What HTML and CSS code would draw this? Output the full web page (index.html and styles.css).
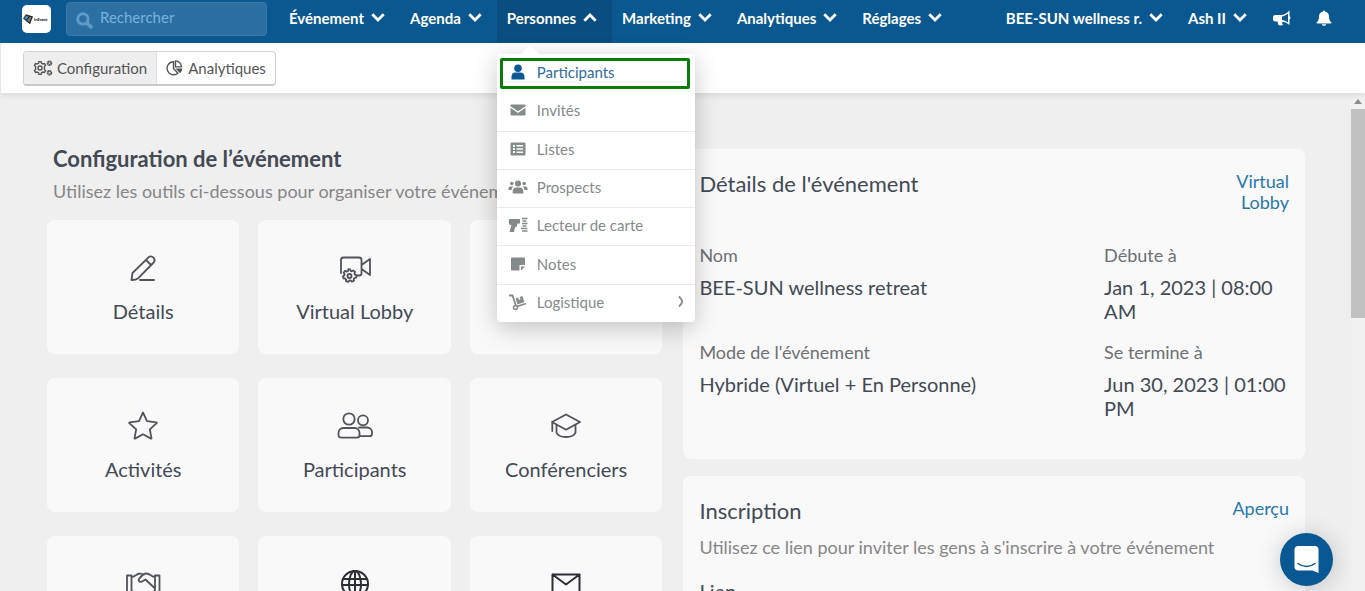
FILE: index.html
```
<!DOCTYPE html>
<html lang="fr">
<head>
<meta charset="utf-8">
<title>Configuration de l’événement</title>
<link rel="stylesheet" href="styles.css">
</head>
<body>
<svg class="defs" aria-hidden="true">
  <symbol id="chev" viewBox="0 0 14 9"><path d="M1.300 1.300 7 7 12.700 1.300" fill="none" stroke="currentColor" stroke-width="2.800"/></symbol>
</svg>
<header class="topbar">
  <a class="logo" href="#" aria-label="Accueil">
    <svg viewBox="0 0 29 28" width="29" height="28"><path d="M1 13.500 4 9.200l7 2.300L8 19.200z" fill="#222"/><path d="m2 13.200 2.500-2.700 2.200 1-2.400 3.200z" fill="#3f91c4"/><path d="m5 15.300 3-3.500 1.500.5-2 5z" fill="#777"/><text class="logo-text" x="12" y="16">InEvent</text></svg>
  </a>
  <label class="search">
    <svg viewBox="0 0 16 16" width="17" height="17" aria-hidden="true"><circle cx="6.500" cy="6.500" r="4.900" fill="none" stroke="currentColor" stroke-width="2.800"/><path d="m10 10 5 5" stroke="currentColor" stroke-width="3.400"/></svg>
    <input type="search" placeholder="Rechercher" aria-label="Rechercher">
  </label>
  <nav class="nav">
    <button class="nav-item">Événement<svg class="chev"><use href="#chev"/></svg></button>
    <button class="nav-item">Agenda<svg class="chev"><use href="#chev"/></svg></button>
    <div class="nav-group">
      <button class="nav-item nav-open" aria-expanded="true">Personnes<svg class="chev chev-up"><use href="#chev"/></svg></button>
      <div class="menu">
        <a class="menu-item menu-current" href="#"><svg viewBox="0 0 20 20"><circle cx="10" cy="6.200" r="3.800"/><path d="M3.500 17.500v-2.800c0-2.700 1.700-4.200 4-4.200h5c2.300 0 4 1.500 4 4.200v2.800z"/></svg>Participants</a>
        <a class="menu-item" href="#"><svg viewBox="0 0 20 20"><path d="M3.500 4.500h13c.6 0 1 .4 1 1v.7L10 11.300 2.500 6.200v-.7c0-.6.4-1 1-1zM2.500 7.800 10 12.900l7.500-5.100v6.700c0 .6-.4 1-1 1h-13c-.6 0-1-.4-1-1z"/></svg>Invités</a>
        <a class="menu-item" href="#"><svg viewBox="0 0 20 20"><path fill-rule="evenodd" d="M4 3.500h12c1 0 1.500.5 1.500 1.500v10c0 1-.5 1.500-1.500 1.500H4c-1 0-1.500-.5-1.500-1.500V5c0-1 .5-1.500 1.500-1.500zM5 6v2h2V6zm3.500 0v1.500H15V6zM5 9v2h2V9zm3.500.300v1.500H15V9.300zM5 12v2h2v-2zm3.500.500V14H15v-1.500z"/></svg>Listes</a>
        <a class="menu-item" href="#"><svg viewBox="0 0 20 20"><circle cx="10" cy="6.500" r="3"/><circle cx="3.800" cy="6.500" r="1.800"/><circle cx="16.200" cy="6.500" r="1.800"/><path d="M4.700 16.500v-2.300c0-2.200 1.300-3.700 3.500-3.700h3.600c2.200 0 3.500 1.500 3.500 3.700v2.300zM.5 13v-1.500c0-1.300.8-2 2-2h2.800c-1 .8-1.600 2-1.700 3.500zM19.500 13v-1.500c0-1.300-.8-2-2-2h-2.800c1 .8 1.600 2 1.700 3.500z"/></svg>Prospects</a>
        <a class="menu-item" href="#"><svg viewBox="0 0 20 20"><path d="M1.500 4H12v4.500H9.500L8.500 12H7l-1 5H1.500l2-7H2C.5 8.500.3 5.500 1.500 4z"/><path d="M14 3.500h5.500M14.500 6h4M14 8.500h5.500M14.500 11h4M13 13.500h6.500M14 16h5.500" stroke="currentColor" stroke-width="1.300"/></svg>Lecteur de carte</a>
        <a class="menu-item" href="#"><svg viewBox="0 0 20 20"><path d="M4 3.500h12c.6 0 1 .4 1 1V11h-5.500v5.500H4c-.6 0-1-.4-1-1v-11c0-.6.400-1 1-1zM13 12.500h4l-4 4z"/></svg>Notes</a>
        <a class="menu-item" href="#"><svg viewBox="0 0 20 20"><path d="M1 3.500h3.500l3.500 10.500M9 14.500l9-3" fill="none" stroke="currentColor" stroke-width="1.800"/><circle cx="7.500" cy="15.500" r="2" fill="none" stroke="currentColor" stroke-width="1.500"/><path d="m7.500 6.500 2.700-1 .8 2.500 1.500-.5-.8-2.500 2.500-.9 2.300 6-7 2.500z"/></svg>Logistique<svg class="sub" viewBox="0 0 8 12"><path d="M2 .8C3.500 2.500 5 4.500 5.300 6 5 7.500 3.500 9.500 2 11.200" fill="none" stroke="currentColor" stroke-width="1.800"/></svg></a>
        <span class="highlight"></span>
      </div>
    </div>
    <button class="nav-item">Marketing<svg class="chev"><use href="#chev"/></svg></button>
    <button class="nav-item">Analytiques<svg class="chev"><use href="#chev"/></svg></button>
    <button class="nav-item">Réglages<svg class="chev"><use href="#chev"/></svg></button>
  </nav>
  <div class="account">
    <button class="nav-item">BEE-SUN wellness r.<svg class="chev"><use href="#chev"/></svg></button>
    <button class="nav-item">Ash II<svg class="chev"><use href="#chev"/></svg></button>
    <button class="icon-btn" aria-label="Annonces"><svg viewBox="0 0 18 16" width="18" height="16"><path fill="currentColor" fill-rule="evenodd" d="M16.500.5v5.500c1.300.6 1.300 3 0 3.500V15c-3-2.300-5-3-7.500-3.200.3 1 0 1.800 1 2.700-1 1.300-3.500 1.200-4.500.5-.5-1.300-1-2.200-.7-3.500H2.500C1 11.500 0 10.500 0 9.500V7c0-1.200 1-2 2.500-2H8c3 0 5.500-1.700 8.500-4.500zM15 3.700c-2.200 1.700-4 2.400-6 2.700v3.700c2 .2 3.800 1 6 2.400z"/></svg></button>
    <button class="icon-btn" aria-label="Notifications"><svg viewBox="0 0 16 16" width="16" height="16"><path fill="currentColor" d="M7 1.500c0-1.300 2-1.300 2 0 2.600.6 4 2.500 4 5 0 3.500 1 4.500 2.200 5.700.5.600.2 1.300-.5 1.300H1.300c-.7 0-1-.7-.5-1.300C2 11 3 10 3 6.500c0-2.500 1.400-4.400 4-5zM5.800 14.200h4.400c-.5 2-3.900 2-4.400 0z"/></svg></button>
  </div>
</header>
<div class="subbar">
  <div class="tabs">
    <button class="tab tab-on"><svg viewBox="0 0 20 16" width="20" height="16" fill="none" stroke="currentColor" stroke-width="1.400"><circle cx="7" cy="8" r="2"/><path d="m5.900 1.600-.4 1.700-1.400.7-1.600-.5-1.100 1.900 1.200 1.200v2.800l-1.200 1.200 1.100 1.900 1.600-.5 1.400.7.400 1.700h2.200l.4-1.700 1.400-.7 1.600.5 1.100-1.900-1.200-1.200V6.600l1.200-1.200-1.100-1.900-1.600.5-1.400-.7-.4-1.700z"/><circle cx="16.500" cy="3.200" r="1.800" stroke-dasharray="1.600 .3" stroke-width="2"/><circle cx="16.500" cy="12.800" r="1.800" stroke-dasharray="1.600 .3" stroke-width="2"/></svg>Configuration</button>
    <button class="tab"><svg viewBox="0 0 18 16" width="18" height="16"><path d="M7.500 1.800a6.500 6.500 0 1 0 4.400 11.400L7.500 8.500zM9.500.9v6h6A6 6 0 0 0 9.500.9z" fill="none" stroke="currentColor" stroke-width="1.400"/><path d="M9.500 8.500h6.800a6 6 0 0 1-2.300 4.700z" fill="currentColor"/></svg>Analytiques</button>
  </div>
</div>
<div class="viewport">
  <main class="content">
    <section class="setup">
      <h1 class="heading">Configuration de l’événement</h1>
      <p class="lead">Utilisez les outils ci-dessous pour organiser votre événement</p>
      <div class="cards">
        <a class="card" href="#"><svg viewBox="0 0 40 40"><path d="M8.500 32 l1-7L25.500 9.300a3.700 3.700 0 0 1 5.200 5.200L15 30.300c-1.500 1.400-3.500 1.700-6.500 1.700zM23 12l5 5M17 32h14"/></svg>Détails</a>
        <a class="card" href="#"><svg viewBox="0 0 40 40"><path d="M6 25V12c0-2 .5-2.500 2.500-2.500H24c2 0 2.500.5 2.500 2.500v13.500c0 1.500-.5 2-2.500 2h-2M26.500 17l8.500-6v16l-8.500-6"/><path d="m13.400 21.200-.4 1.800-1.300.6-1.600-.8-1.500 2 1 1.300-.3 1.300-1.400.8.600 2.200 1.700.1.900 1.100-.1 1.600 2.300.7 1.100-1.400h1.300l1.200 1.200 2.100-1.100-.2-1.500.8-1.200 1.600-.3.200-2.300-1.500-.7-.5-1.200.7-1.500-1.800-1.500-1.400.9-1.300-.4-.5-1.500z"/><circle cx="14.500" cy="28" r="2"/></svg>Virtual Lobby</a>
        <div class="card"></div>
        <a class="card" href="#"><svg viewBox="0 0 40 40"><path d="m20 6.500 4 8.600 9.500 1.200c.4 0 .5.500.2.800l-6.900 6.300 1.700 8.800c.1.400-.2.600-.5.400l-8-4.300-8 4.300c-.3.200-.6 0-.5-.4l1.700-8.800-6.900-6.300c-.3-.3-.2-.8.200-.8l9.500-1.200z"/></svg>Activités</a>
        <a class="card" href="#"><svg viewBox="0 0 40 40"><circle cx="14" cy="13" r="5.700"/><circle cx="28" cy="14.300" r="5"/><path d="M8.500 22h11.200c3 0 4.800 2.300 4.800 5v2c0 1.700-1 2.700-2.700 2.700H6.200c-1.700 0-2.700-1-2.700-2.700v-2c0-2.700 2-5 5-5zM24 21.500h8c3 0 5 2 5 4.500v2c0 1.500-1 2.200-2.500 2.200H25"/></svg>Participants</a>
        <a class="card" href="#"><svg viewBox="0 0 40 40"><path d="M20 8.500 34 16l-14 7.800L6 16zM10.500 18.500v8c2 6 17 6 19 0v-8M6.300 16v9"/></svg>Conférenciers</a>
        <a class="card" href="#"><svg viewBox="0 0 40 40"><path d="M4 11.500h4.500v18H4zM36.500 11.500H32v18h4.500zM8.500 13c3.500 0 5-3.500 8.500-3.500l4 1M32 13c-3.500 0-5-3.500-8.500-3.500-2.500 0-4.500 1.500-7.500 5.500-1 1.500 1 3.800 3 2.500l3.500-2 9.500 9M8.500 27l3 1 8 6 12-7"/></svg></a>
        <a class="card card-dark" href="#"><svg viewBox="0 0 40 40"><circle cx="20" cy="20" r="13"/><ellipse cx="20" cy="20" rx="6" ry="13"/><path d="M20 7v26M8.500 15h23M7 21h26"/></svg></a>
        <a class="card card-dark" href="#"><svg viewBox="0 0 40 40"><path d="M6.500 10.500h27v20h-27zM6.500 10.500 20 20.500l13.500-10"/></svg></a>
      </div>
    </section>
    <div class="side">
      <section class="panel">
        <div class="panel-head"><h2 class="title">Détails de l'événement</h2><a class="link link-narrow" href="#">Virtual Lobby</a></div>
        <dl class="facts">
          <div class="fact"><dt>Nom</dt><dd>BEE-SUN wellness retreat</dd></div>
          <div class="fact"><dt>Débute à</dt><dd>Jan 1, 2023 | 08:00 AM</dd></div>
          <div class="fact"><dt>Mode de l'événement</dt><dd>Hybride (Virtuel + En Personne)</dd></div>
          <div class="fact"><dt>Se termine à</dt><dd>Jun 30, 2023 | 01:00 PM</dd></div>
        </dl>
      </section>
      <section class="panel">
        <div class="panel-head panel-head-tight"><h2 class="title">Inscription</h2><a class="link" href="#">Aperçu</a></div>
        <p class="note">Utilisez ce lien pour inviter les gens à s'inscrire à votre événement</p>
        <h3 class="subtitle">Lien</h3>
      </section>
    </div>
  </main>
  <div class="scroll" aria-hidden="true"><span class="scroll-up"></span><span class="scroll-thumb"></span></div>
</div>
<button class="chat" aria-label="Ouvrir la messagerie"><svg viewBox="0 0 26 28" width="26" height="28"><path d="M4 0h17c2 0 3.500 1.500 3.500 3.500V27l-6-2.500H4c-2 0-3.500-1.500-3.500-3.500V3.500C.5 1.500 2 0 4 0z" fill="#fff"/><path d="M4 17.500c5 4 12 4 17 0" fill="none" stroke="#0a5893" stroke-width="1.500" stroke-linecap="round"/></svg></button>
</body>
</html>
```

FILE: styles.css
```
* { box-sizing: border-box; }

body {
  margin: 0;
  height: 100vh;
  display: flex;
  flex-direction: column;
  overflow: hidden;
  background: #efefef;
  color: #434a54;
  font-family: Lato, "Open Sans", sans-serif;
  font-size: 15px;
}

button, input { font: inherit; color: inherit; }
button { border: 0; background: none; padding: 0; cursor: pointer; }
a { color: inherit; text-decoration: none; }
h1, h2, h3, p, dl, dd { margin: 0; font-weight: 400; }
.defs { position: absolute; width: 0; height: 0; }

/* Top bar */
.topbar {
  display: flex;
  align-items: center;
  height: 43px;
  flex: none;
  padding-left: 22px;
  padding-right: 33px;
  background: #0b5891;
  color: #fff;
  position: relative;
  z-index: 2;
}
.logo {
  display: flex;
  margin-bottom: 5px;
  border-radius: 5px;
  background: #fff;
}
.logo-text { font-size: 4px; font-weight: 900; fill: #222; }
.search {
  display: flex;
  align-items: center;
  width: 201px;
  height: 34px;
  margin: 0 12px 6px 15px;
  padding-left: 9px;
  border: 1px solid #3a7aaa;
  border-radius: 4px;
  background: #2b6fa3;
  color: #5f9bc8;
}
.search svg { flex: none; margin-top: 4px; }
.search input {
  width: 100%;
  min-width: 0;
  padding: 0 7px 3px;
  border: 0;
  outline: 0;
  background: none;
}
.search input::placeholder { color: #78b2de; opacity: 1; }
.nav, .account { display: flex; align-self: stretch; }
.account { margin-left: auto; }
.nav-item {
  display: flex;
  align-items: center;
  gap: 7px;
  height: 43px;
  padding: 0 15px 8px 10px;
  font-weight: 700;
  white-space: nowrap;
}
.nav-open { background: #0a4d80; }
.chev { width: 14px; height: 9px; }
.chev-up { transform: rotate(180deg); }
.nav-group { position: relative; }
.icon-btn { display: flex; align-items: center; padding: 0 0 8px 11px; }
.icon-btn + .icon-btn { padding-left: 25px; }

/* Drop-down menu */
.menu {
  position: absolute;
  top: 54px;
  left: 0;
  width: 198px;
  height: 268px;
  display: grid;
  grid-auto-rows: 1fr;
  border-radius: 4px;
  background: #fff;
  color: #858a8a;
  box-shadow: 0 6px 24px rgba(0, 0, 0, .22);
}
.menu::before {
  content: "";
  position: absolute;
  top: -9px;
  left: 24px;
  border: 9px solid transparent;
  border-top: 0;
  border-bottom-color: #fff;
}
.menu-item {
  display: flex;
  align-items: center;
  gap: 9px;
  padding: 0 10px 3px 11px;
  border-top: 1px solid #e9ecec;
}
.menu-item svg { width: 20px; height: 20px; fill: currentColor; }
.menu-item .sub { width: 8px; height: 13px; margin-left: auto; }
.menu-current { border-top-color: transparent; color: #2e6ca0; }
.menu-current + .menu-item { border-top-color: transparent; }
.menu-current svg { fill: #0b5891; }
.highlight {
  position: absolute;
  top: 4px;
  left: 3px;
  width: 190px;
  height: 31px;
  border: 3px solid #0a7c0a;
  border-radius: 2px;
}

/* Tabs */
.subbar {
  flex: none;
  padding: 8px 22px 7px;
  border-left: 1px solid #e4e6ea;
  background: #fff;
  box-shadow: 0 1px 8px rgba(0, 0, 0, .12);
  position: relative;
  z-index: 1;
}
.tabs {
  display: inline-flex;
  vertical-align: top;
  border: 1px solid #d3d3d3;
  border-bottom: 2px solid #c9c9c9;
  border-radius: 4px;
  overflow: hidden;
  color: #555;
}
.tab {
  display: flex;
  align-items: center;
  gap: 4px;
  height: 32px;
  padding: 0 9px;
}
.tab-on { background: #eee; border-right: 1px solid #ddd; }

/* Page */
.viewport { flex: 1; min-height: 0; display: flex; }
.content {
  flex: 1;
  min-width: 0;
  display: grid;
  grid-template-columns: 99fr 100fr;
  align-items: start;
  gap: 21px;
  padding: 52px 46px 0 47px;
  overflow: hidden;
}
.heading {
  padding-left: 6px;
  font-size: 22px;
  font-weight: 700;
  line-height: 28px;
}
.lead {
  margin: 6px 0 17px;
  padding-left: 6px;
  color: #868686;
  font-size: 18px;
  line-height: 24px;
  white-space: nowrap;
}
.cards {
  display: grid;
  grid-template-columns: repeat(3, 1fr);
  gap: 24px 19px;
}
.card {
  display: flex;
  flex-direction: column;
  align-items: center;
  gap: 11px;
  padding: 28px 8px 31px;
  border-radius: 8px;
  background: #f9f9f9;
  font-size: 20px;
  line-height: 24px;
}
.card svg {
  width: 40px;
  height: 40px;
  fill: none;
  stroke: #50545a;
  stroke-width: 1.8;
  stroke-linejoin: round;
  stroke-linecap: round;
}
.card-dark svg { stroke: #2c3036; stroke-width: 2; }
.side { display: grid; gap: 17px; padding-top: 4px; min-width: 0; }
.panel {
  padding: 21px 16px 39px;
  border-radius: 8px;
  background: #f9f9f9;
}
.panel-head {
  display: flex;
  justify-content: space-between;
  align-items: flex-start;
  margin-bottom: 30px;
}
.panel-head-tight { margin-bottom: 10px; }
.title { font-size: 22px; line-height: 28px; }
.link {
  padding-top: 1px;
  color: #2878aa;
  font-size: 18px;
  line-height: 21px;
  text-align: right;
}
.link-narrow { width: 80px; }
.facts {
  display: grid;
  grid-template-columns: 405fr 185fr;
  gap: 17px 0;
}
.fact dt {
  margin-bottom: 8px;
  color: #6c7075;
  font-size: 18px;
  line-height: 24px;
}
.fact dd { font-size: 20px; line-height: 24px; }
.note { color: #868686; font-size: 18px; line-height: 24px; }
.subtitle { margin-top: 20px; font-size: 20px; line-height: 24px; }

/* Scroll track */
.scroll {
  flex: none;
  width: 14px;
  display: flex;
  flex-direction: column;
  align-items: center;
  background: #f1f1f1;
}
.scroll-up {
  margin: 6px 0 5px;
  border: 4px solid transparent;
  border-top: 0;
  border-bottom: 5px solid #8c8c8c;
}
.scroll-thumb { width: 100%; height: 42%; background: #c1c1c1; }

.chat {
  position: fixed;
  right: 32px;
  bottom: 5px;
  z-index: 3;
  display: grid;
  place-items: center;
  width: 53px;
  height: 53px;
  border-radius: 50%;
  background: #0a5893;
  box-shadow: 0 2px 24px rgba(0, 0, 0, .2);
}
```
